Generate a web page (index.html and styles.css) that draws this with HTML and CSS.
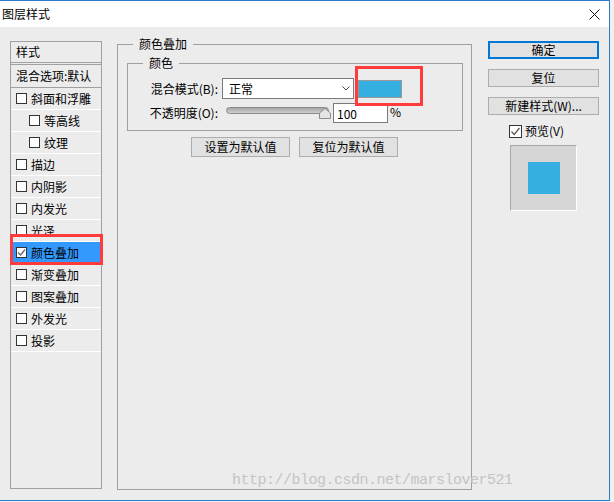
FILE: index.html
```html
<!DOCTYPE html>
<html lang="zh-CN">
<head>
<meta charset="utf-8">
<title>图层样式</title>
<link rel="stylesheet" href="styles.css">
</head>
<body>
<div class="window">
  <div class="titlebar">
    <span class="title">图层样式</span>
    <svg class="close" width="11" height="11" viewBox="0 0 11 11"><path d="M0.5 0.5 L10.5 10.5 M10.5 0.5 L0.5 10.5" stroke="#111" stroke-width="1" fill="none"/></svg>
  </div>
  <div class="content">
    <div class="side">
      <div class="side-head">样式</div>
      <div class="side-blend">混合选项:默认</div>
      <ul class="fx-list">
        <li class="fx"><span class="cb"></span>斜面和浮雕</li>
        <li class="fx sub"><span class="cb"></span>等高线</li>
        <li class="fx sub"><span class="cb"></span>纹理</li>
        <li class="fx"><span class="cb"></span>描边</li>
        <li class="fx"><span class="cb"></span>内阴影</li>
        <li class="fx"><span class="cb"></span>内发光</li>
        <li class="fx"><span class="cb"></span>光泽</li>
        <li class="fx active"><span class="cb"><svg width="9" height="9" viewBox="0 0 9 9"><path d="M1 4.5 L3.5 7 L8 1.5" stroke="#666" stroke-width="1.2" fill="none"/></svg></span>颜色叠加</li>
        <li class="fx"><span class="cb"></span>渐变叠加</li>
        <li class="fx"><span class="cb"></span>图案叠加</li>
        <li class="fx"><span class="cb"></span>外发光</li>
        <li class="fx"><span class="cb"></span>投影</li>
      </ul>
    </div>

    <fieldset class="group main-group">
      <legend>颜色叠加</legend>
      <fieldset class="group inner-group">
        <legend>颜色</legend>
        <div class="form">
          <span class="label">混合模式(B):</span>
          <div class="field-row">
            <div class="select"><span>正常</span><svg width="8" height="5" viewBox="0 0 8 5"><path d="M0.5 0.5 L4 4 L7.5 0.5" stroke="#444" stroke-width="1" fill="none"/></svg></div>
            <div class="swatch"></div>
          </div>
          <span class="label">不透明度(O):</span>
          <div class="field-row">
            <div class="slider">
              <div class="track"></div>
              <svg class="thumb" width="12" height="11" viewBox="0 0 12 11"><path d="M0.5 10.5 L0.5 5 L6 0.5 L11.5 5 L11.5 10.5 Z" fill="#e4e4e4" stroke="#8c8c8c" stroke-width="1"/></svg>
            </div>
            <input class="num" type="text" value="100">
            <span class="pct">%</span>
          </div>
        </div>
      </fieldset>
      <div class="btn-row">
        <button class="btn">设置为默认值</button>
        <button class="btn">复位为默认值</button>
      </div>
    </fieldset>

    <div class="actions">
      <button class="btn btn-action primary">确定</button>
      <button class="btn btn-action">复位</button>
      <button class="btn btn-action">新建样式(W)...</button>
      <div class="preview-check">
        <span class="pcb"><svg width="11" height="11" viewBox="0 0 11 11"><path d="M1.5 5.5 L4.2 8.5 L9.5 2" stroke="#555" stroke-width="1.2" fill="none"/></svg></span>
        <span>预览(V)</span>
      </div>
      <div class="preview"><div class="preview-fill"></div></div>
    </div>
  </div>

  <div class="mark mark-list"></div>
  <div class="mark mark-swatch"></div>
  <div class="watermark">http://blog.csdn.net/marslover521</div>
</div>
</body>
</html>
```

FILE: styles.css
```css
* { box-sizing: border-box; }
html, body { margin: 0; padding: 0; }
body {
  background: #f0f0f0;
  font-family: "Noto Sans CJK SC", "Microsoft YaHei", sans-serif;
  font-size: 12px;
  color: #000;
  width: 614px;
  height: 502px;
  overflow: hidden;
}
.window {
  position: relative;
  width: 610px;
  height: 501px;
  background: #ececec;
  border-top: 1px solid #2a7bc9;
  border-right: 1px solid #2a7bc9;
  border-bottom: 1px solid #2a7bc9;
}
.titlebar {
  height: 26px;
  background: #fff;
  display: flex;
  align-items: center;
  justify-content: space-between;
  padding: 0 9px 0 2px;
  line-height: 14px;
}
.content {
  display: flex;
  align-items: flex-start;
  padding: 10px 0 0 10px;
}

/* left style list */
.side {
  width: 92px;
  height: 448px;
  margin-top: 4px;
  margin-right: 15px;
  border: 1px solid #a0a0a0;
}
.side-head {
  height: 21px;
  border-bottom: 1px solid #a0a0a0;
  padding-left: 5px;
  line-height: 20px;
}
.side-blend {
  margin-top: 1px;
  height: 24px;
  border-top: 1px solid #a0a0a0;
  border-bottom: 1px solid #a0a0a0;
  padding-left: 5px;
  line-height: 22px;
  white-space: nowrap;
}
.fx-list { list-style: none; margin: 0; padding: 0; }
.fx {
  height: 22px;
  border-bottom: 1px solid #fff;
  display: flex;
  align-items: center;
  padding-left: 5px;
  line-height: 21px;
  white-space: nowrap;
}
.fx.sub { padding-left: 18px; }
.fx.active { background: #3399ff; }
.cb {
  flex: none;
  width: 11px;
  height: 11px;
  margin-right: 4px;
  border: 1px solid #333;
  background: #fff;
  display: flex;
  align-items: center;
  justify-content: center;
}

/* group boxes */
.group {
  margin: 0;
  padding: 0;
  min-width: 0;
  border: 1px solid #a0a0a0;
}
.group > legend {
  padding: 0 6px;
  margin-left: 15px;
  line-height: 14px;
}
.main-group {
  width: 355px;
  height: 453px;
  margin-right: 16px;
}
.inner-group {
  margin: 5px 8px 0 9px;
  padding: 8px 0 7px 0;
}
.form {
  display: grid;
  grid-template-columns: 90px auto;
  column-gap: 4px;
  row-gap: 4px;
  align-items: center;
}
.label { text-align: right; white-space: nowrap; line-height: 14px; }
.field-row { display: flex; align-items: center; }
.select {
  width: 132px;
  height: 21px;
  background: #fff;
  border: 1px solid #7a7a7a;
  display: flex;
  align-items: center;
  justify-content: space-between;
  padding: 0 3px 0 6px;
  line-height: 14px;
}
.swatch {
  width: 44px;
  height: 18px;
  margin-left: 4px;
  background: #35aee0;
  border: 1px solid #999;
}
.slider {
  position: relative;
  width: 105px;
  height: 20px;
  margin-left: 4px;
}
.track {
  margin-top: 4px;
  width: 103px;
  height: 7px;
  border: 1px solid #8a8a8a;
  border-radius: 4px;
  background: linear-gradient(#a4a4a4, #cfcfcf);
}
.thumb { position: absolute; left: 93px; top: 5px; }
.num {
  width: 55px;
  height: 20px;
  margin: 0 0 0 2px;
  padding: 0 3px;
  border: 1px solid #7a7a7a;
  background: #fff;
  font: inherit;
  font-size: 12px;
  color: #000;
  outline: none;
}
.pct { margin-left: 2px; align-self: flex-start; line-height: 14px; margin-top: 2px; }

.btn {
  font-family: inherit;
  font-size: 12px;
  color: #000;
  background: #e1e1e1;
  border: 1px solid #adadad;
  padding: 0;
  margin: 0;
  line-height: 14px;
}
.btn-row {
  display: flex;
  justify-content: center;
  gap: 9px;
  margin-top: 6px;
}
.btn-row .btn { width: 99px; height: 20px; }

/* right column */
.actions {
  width: 111px;
  margin-top: 4px;
  display: flex;
  flex-direction: column;
}
.btn-action { height: 18px; width: 111px; }
.btn-action + .btn-action { margin-top: 10px; }
.primary { border: 2px solid #0078d7; }
.preview-check {
  display: flex;
  align-items: center;
  height: 14px;
  margin-top: 9px;
  padding-left: 21px;
  line-height: 14px;
}
.pcb {
  width: 13px;
  height: 13px;
  border: 1px solid #333;
  background: #fff;
  margin-right: 3px;
  display: flex;
  align-items: center;
  justify-content: center;
}
.preview {
  width: 67px;
  height: 66px;
  margin: 7px 0 0 22px;
  background: #d6d6d6;
  border-top: 1px solid #a8a8a8;
  border-left: 1px solid #a8a8a8;
  border-right: 1px solid #fff;
  border-bottom: 1px solid #fff;
  display: flex;
  align-items: center;
  justify-content: center;
}
.preview-fill { width: 32px; height: 32px; background: #35aee0; }

/* annotations */
.mark { position: absolute; border: 3px solid #ff3b3b; }
.mark-list { left: 10px; top: 233px; width: 93px; height: 31px; }
.mark-swatch { left: 355px; top: 65px; width: 68px; height: 40px; }
.watermark {
  position: absolute;
  left: 232px;
  top: 472px;
  font-family: "Liberation Mono", monospace;
  font-size: 15px;
  letter-spacing: -0.5px;
  line-height: 16px;
  color: #c4c4c4;
  white-space: nowrap;
}
```
